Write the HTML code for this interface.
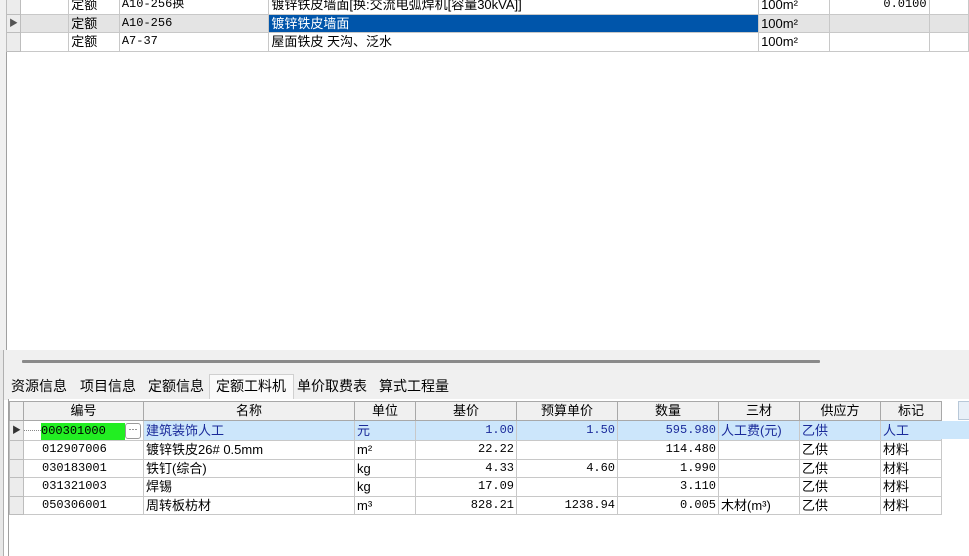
<!DOCTYPE html><html><head><meta charset="utf-8"><style>
body{margin:0;width:969px;height:556px;overflow:hidden;background:#fff;font-family:"Liberation Sans","Noto Sans CJK SC",sans-serif;font-size:13px;position:relative}
.a{position:absolute}
table{border-collapse:collapse;table-layout:fixed;position:absolute}
td{border:1px solid #c8c8c8;padding:0 2px;white-space:nowrap;overflow:hidden;height:17.5px;line-height:17px;color:#000}
.m{font-family:"Liberation Mono","Noto Sans CJK SC",monospace;font-size:12px}
.r{text-align:right}
.ind{background:#ececec;border-color:#bdbdbd}
th{border:1px solid #a8a8a8;background:#f0f0f0;font-weight:normal;height:18px;line-height:18px;font-size:13px;padding:0}
.tab{position:absolute;top:376px;height:21px;line-height:21px;font-size:14px;color:#000}
</style></head><body>
<div class="a" style="left:0;top:0;width:6px;height:350px;background:#f0f0f0;border-right:1px solid #a0a0a0"></div>
<table style="left:6px;top:-5px">
<colgroup><col width="12"><col width="49"><col width="51"><col width="151"><col width="494"><col width="71"><col width="101"><col width="40"></colgroup>
<tr><td class="ind"></td><td></td><td>定额</td><td class="m">A10-256换</td><td>镀锌铁皮墙面[换:交流电弧焊机[容量30kVA]]</td><td>100m²</td><td class="r m">0.0100</td><td></td></tr>
<tr style="background:#e4e4e4"><td class="ind" style="font-size:9px;color:#555">▶</td><td style="background:#e4e4e4"></td><td>定额</td><td class="m">A10-256</td><td style="background:#0055aa;color:#fff">镀锌铁皮墙面</td><td>100m²</td><td style="border-left:1px solid #808080"></td><td></td></tr>
<tr><td class="ind"></td><td></td><td>定额</td><td class="m">A7-37</td><td>屋面铁皮 天沟、泛水</td><td>100m²</td><td style="border-left:1px solid #808080"></td><td></td></tr>
</table>
<div class="a" style="left:0;top:350px;width:969px;height:22px;background:#f0f0f0"></div>
<div class="a" style="left:22px;top:360px;width:798px;height:3px;background:#8a8a8a;border-radius:1px"></div>
<div class="a" style="left:0;top:372px;width:969px;height:28px;background:#f0f0f0"></div>
<div class="a" style="left:0;top:350px;width:3px;height:206px;background:#e8e8e8;border-right:1px solid #b0b0b0"></div>
<div class="tab" style="left:11px">资源信息</div>
<div class="tab" style="left:80px">项目信息</div>
<div class="tab" style="left:148px">定额信息</div>
<div class="a" style="left:209px;top:374px;width:83px;height:24px;background:#fafafa;border:1px solid #d0d0d0;border-bottom:none"></div>
<div class="tab" style="left:216px">定额工料机</div>
<div class="tab" style="left:297px">单价取费表</div>
<div class="tab" style="left:379px">算式工程量</div>
<div class="a" style="left:8px;top:399px;width:961px;height:157px;background:#fff;border-left:1px solid #a0a0a0"></div>
<table style="left:9px;top:401px">
<colgroup><col width="13"><col width="118"><col width="211"><col width="61"><col width="101"><col width="101"><col width="101"><col width="81"><col width="81"><col width="61"></colgroup>
<tr><th></th><th>编号</th><th>名称</th><th>单位</th><th>基价</th><th>预算单价</th><th>数量</th><th>三材</th><th>供应方</th><th>标记</th></tr>
<tr style="background:#cce6fb;color:#1a2a9a"><td class="ind" style="font-size:9px;color:#333">▶</td><td style="padding-left:0;border:none;background:#fff"><span style="display:inline-block;width:17px;border-top:1px dotted #888;vertical-align:middle"></span><span class="m" style="display:inline-block;background:#22ee22;width:84px;color:#000">000301000</span><span style="display:inline-block;width:14px;height:14px;border:1px solid #999;border-radius:3px;font-size:9px;line-height:10px;text-align:center;vertical-align:middle">···</span></td><td style="color:#1a2a9a">建筑装饰人工</td><td style="color:#1a2a9a">元</td><td class="r m" style="color:#1a2a9a">1.00</td><td class="r m" style="color:#1a2a9a">1.50</td><td class="r m" style="color:#1a2a9a">595.980</td><td style="color:#1a2a9a">人工费(元)</td><td style="color:#1a2a9a">乙供</td><td style="color:#1a2a9a">人工</td></tr>
<tr><td class="ind"></td><td style="padding-left:18px" class="m">012907006</td><td>镀锌铁皮26# 0.5mm</td><td>m²</td><td class="r m">22.22</td><td></td><td class="r m">114.480</td><td></td><td>乙供</td><td>材料</td></tr>
<tr><td class="ind"></td><td style="padding-left:18px" class="m">030183001</td><td>铁钉(综合)</td><td>kg</td><td class="r m">4.33</td><td class="r m">4.60</td><td class="r m">1.990</td><td></td><td>乙供</td><td>材料</td></tr>
<tr><td class="ind"></td><td style="padding-left:18px" class="m">031321003</td><td>焊锡</td><td>kg</td><td class="r m">17.09</td><td></td><td class="r m">3.110</td><td></td><td>乙供</td><td>材料</td></tr>
<tr><td class="ind"></td><td style="padding-left:18px" class="m">050306001</td><td>周转板枋材</td><td>m³</td><td class="r m">828.21</td><td class="r m">1238.94</td><td class="r m">0.005</td><td>木材(m³)</td><td>乙供</td><td>材料</td></tr>
</table>
<div class="a" style="left:940px;top:421px;width:29px;height:18px;background:#cce6fb"></div>
<div class="a" style="left:958px;top:401px;width:11px;height:17px;background:#e8f0f8;border:1px solid #b8c8d8"></div>
</body></html>
